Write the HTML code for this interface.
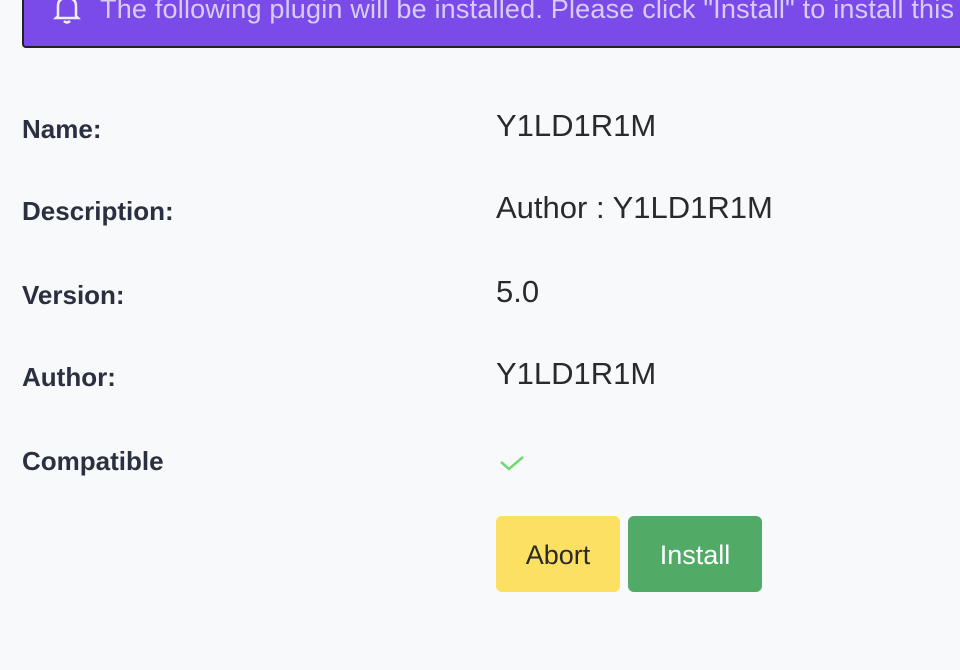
<!DOCTYPE html>
<html><head><meta charset="utf-8"><style>
html,body{margin:0;padding:0;width:960px;height:670px;overflow:hidden;background:#f8f9fb;font-family:"Liberation Sans",sans-serif;}
.wrap{position:absolute;left:0;top:0;width:960px;height:670px;overflow:hidden}
.banner{position:absolute;left:22px;top:-30px;width:960px;height:76px;background:#7b4bea;border-left:2px solid #222;border-bottom:2px solid #222;border-radius:0 0 0 4px;}
.btxt{position:absolute;left:100px;top:-6px;width:860px;overflow:hidden;font-size:27px;color:#d9ccfa;white-space:nowrap;letter-spacing:0.2px}
.bell{position:absolute;left:52px;top:-4px}
.lab{position:absolute;left:22px;font-size:26px;font-weight:bold;color:#2b3040;}
.val{position:absolute;left:496px;font-size:31px;color:#2a2a2a;}
.btn{position:absolute;top:516px;height:76px;border-radius:6px;font-size:27px;line-height:78px;text-align:center;}
</style></head><body><div class="wrap">
<div class="banner"></div>
<svg class="bell" width="30" height="30" viewBox="0 0 30 30"><path d="M4 22 L6 20 L6 10 Q6 2 15 2 Q24 2 24 10 L24 20 L26 22 Z" fill="none" stroke="#eee" stroke-width="2.5"/><path d="M12 25 Q15 28 18 25" fill="none" stroke="#eee" stroke-width="2.5"/></svg>
<div class="btxt">The following plugin will be installed. Please click "Install" to install this plugin.</div>
<div class="lab" style="top:114px">Name:</div><div class="val" style="top:108px">Y1LD1R1M</div>
<div class="lab" style="top:196px">Description:</div><div class="val" style="top:190px">Author : Y1LD1R1M</div>
<div class="lab" style="top:280px">Version:</div><div class="val" style="top:274px">5.0</div>
<div class="lab" style="top:362px">Author:</div><div class="val" style="top:356px">Y1LD1R1M</div>
<div class="lab" style="top:446px">Compatible</div>
<svg style="position:absolute;left:500px;top:452px" width="26" height="20" viewBox="0 0 26 20"><path d="M1 10 L9 17 L23 5" fill="none" stroke="#6fd86f" stroke-width="2.5"/></svg>
<div class="btn" style="left:496px;width:124px;background:#fbe062;color:#2a2a2a">Abort</div>
<div class="btn" style="left:628px;width:134px;background:#51ab67;color:#fff">Install</div>
</div></body></html>
